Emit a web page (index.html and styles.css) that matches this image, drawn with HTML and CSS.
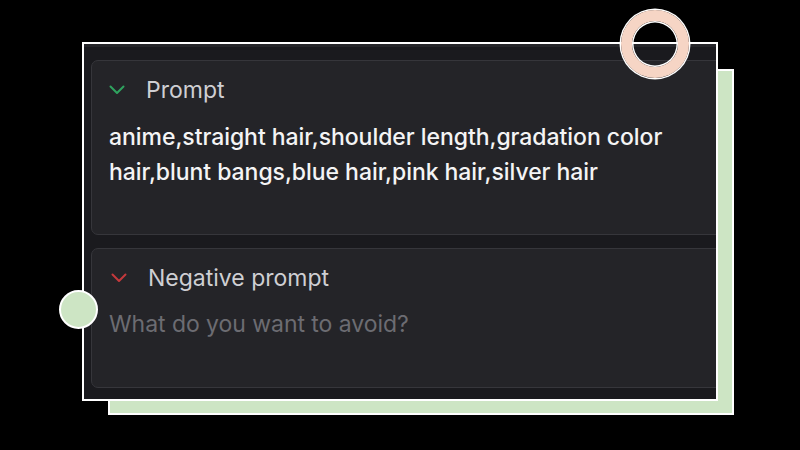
FILE: index.html
```html
<!DOCTYPE html>
<html>
<head>
<meta charset="utf-8">
<link rel="stylesheet" href="styles.css">
</head>
<body>
<div class="stage">
  <div class="shadow-rect"></div>
  <div class="panel">
    <section class="card card-prompt">
      <div class="card-head">
        <svg class="chev" width="16" height="10" viewBox="0 0 16 10"><path d="M1.5 1.5 L8 8 L14.5 1.5" fill="none" stroke="#2fa35f" stroke-width="2" stroke-linecap="round" stroke-linejoin="round"/></svg>
        <span class="head-label">Prompt</span>
      </div>
      <p class="card-text">anime,straight hair,shoulder length,gradation color<br>hair,blunt bangs,blue hair,pink hair,silver hair</p>
    </section>
    <section class="card card-neg">
      <div class="card-head">
        <svg class="chev" width="16" height="10" viewBox="0 0 16 10"><path d="M1.5 1.5 L8 8 L14.5 1.5" fill="none" stroke="#c4393c" stroke-width="2" stroke-linecap="round" stroke-linejoin="round"/></svg>
        <span class="head-label">Negative prompt</span>
      </div>
      <p class="card-text placeholder">What do you want to avoid?</p>
    </section>
  </div>
  <div class="ring"></div>
  <div class="dot"></div>
</div>
</body>
</html>
```
FILE: styles.css
```css
* { box-sizing: border-box; }
html, body {
  margin: 0;
  padding: 0;
  background: #000;
  width: 800px;
  height: 450px;
  overflow: hidden;
  font-family: Inter, "Noto Sans", sans-serif;
}
.stage {
  position: relative;
  width: 800px;
  height: 450px;
  padding: 42px 0 0 82px;
}
.shadow-rect {
  position: absolute;
  left: 108px;
  top: 69px;
  width: 626px;
  height: 346px;
  background: #cde5c4;
  border: 2px solid #fff;
}
.panel {
  position: relative;
  width: 636px;
  height: 359px;
  border: 2px solid #fff;
  background: #1a1a1e;
  overflow: hidden;
  padding: 16px 0 0 7px;
  display: flex;
  flex-direction: column;
  gap: 13px;
  box-shadow: inset 0 3px 0 #26262a;
}
.card {
  width: 680px;
  flex: none;
  background: #242428;
  border: 1px solid #36363b;
  border-radius: 7px;
  padding: 14px 0 0 17px;
}
.card-prompt { height: 175px; }
.card-neg { height: 140px; padding-left: 19px; }
.card-head {
  display: flex;
  align-items: center;
  height: 30px;
  gap: 21px;
}
.chev { display: block; flex: none; }
.head-label {
  font-size: 23px;
  color: #cfcfd3;
}
.card-text {
  margin: 15px 0 0 0;
  font-size: 23px;
  line-height: 35px;
  color: #f4f4f5;
  font-weight: 500;
  letter-spacing: -0.05px;
}
.card-neg .card-text { margin: 14px 0 0 -2px; }
.placeholder {
  color: #6c6c72;
  font-weight: 400;
}
.ring {
  position: absolute;
  left: 621px;
  top: 10px;
  width: 68px;
  height: 68px;
  border-radius: 50%;
  border: 11px solid #f6d5c5;
  box-shadow: 0 0 0 1.5px #fff, inset 0 0 0 1.5px #fff;
}
.dot {
  position: absolute;
  left: 59px;
  top: 290px;
  width: 39px;
  height: 39px;
  border-radius: 50%;
  background: #cde5c4;
  border: 2px solid #fff;
}
```
